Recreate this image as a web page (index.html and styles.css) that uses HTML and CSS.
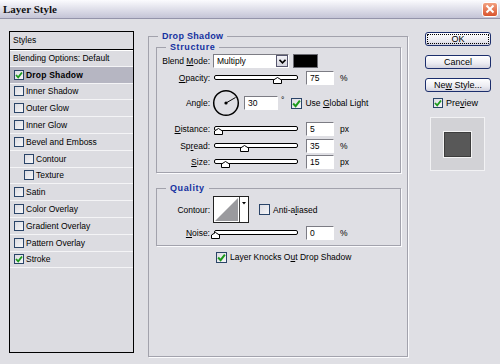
FILE: index.html
```html
<!DOCTYPE html>
<html lang="en">
<head>
  <meta charset="UTF-8">
  <title>Layer Style</title>
  <link rel="stylesheet" href="styles.css">
</head>
<body>

  <!-- Barra de titulo -->
  <div class="titlebar">
    <span class="title">Layer Style</span>
    <span class="close">
      <svg width="10" height="10" viewBox="0 0 10 10"><path d="M1.5 1.5 L8.5 8.5 M8.5 1.5 L1.5 8.5" stroke="#fff" stroke-width="2"/></svg>
    </span>
  </div>

  <div class="main">

    <!-- Lista de estilos -->
    <div class="styles-panel">
      <div class="styles-head">Styles</div>
      <ul class="style-list">
        <li class="item">Blending Options: Default</li>
        <li class="item selected"><span class="check on"><svg width="8" height="8" viewBox="0 0 8 8"><path d="M1 4 L3.2 6.3 L7 1.5" stroke="#1c9a1c" stroke-width="1.8" fill="none"/></svg></span>Drop Shadow</li>
        <li class="item"><span class="check"></span>Inner Shadow</li>
        <li class="item"><span class="check"></span>Outer Glow</li>
        <li class="item"><span class="check"></span>Inner Glow</li>
        <li class="item"><span class="check"></span>Bevel and Emboss</li>
        <li class="item sub"><span class="check"></span>Contour</li>
        <li class="item sub"><span class="check"></span>Texture</li>
        <li class="item"><span class="check"></span>Satin</li>
        <li class="item"><span class="check"></span>Color Overlay</li>
        <li class="item"><span class="check"></span>Gradient Overlay</li>
        <li class="item"><span class="check"></span>Pattern Overlay</li>
        <li class="item"><span class="check on"><svg width="8" height="8" viewBox="0 0 8 8"><path d="M1 4 L3.2 6.3 L7 1.5" stroke="#1c9a1c" stroke-width="1.8" fill="none"/></svg></span>Stroke</li>
      </ul>
    </div>

    <!-- Painel Drop Shadow -->
    <fieldset class="group outer">
      <legend>Drop Shadow</legend>

      <fieldset class="group inner structure">
        <legend>Structure</legend>

        <div class="row first">
          <span class="label">Blend <u>M</u>ode:</span>
          <span class="select">Multiply<span class="arrow"><svg width="7" height="5" viewBox="0 0 7 5"><path d="M0.5 0.8 L3.5 3.8 L6.5 0.8" stroke="#000" stroke-width="1.6" fill="none"/></svg></span></span>
          <span class="swatch"></span>
        </div>

        <div class="row">
          <span class="label"><u>O</u>pacity:</span>
          <span class="slider"><span class="track"></span><svg class="thumb" style="left:60px" width="9" height="7" viewBox="0 0 9 7"><path d="M0.5 3 L4.5 0.5 L8.5 3 L8.5 6.5 L0.5 6.5 Z" fill="#fff" stroke="#000"/></svg></span>
          <span class="num">75</span>
          <span class="unit">%</span>
        </div>

        <div class="row angle-row">
          <span class="label">Angle:</span>
          <svg class="dial" width="28" height="28" viewBox="0 0 28 28">
            <circle cx="14" cy="14" r="12.3" fill="none" stroke="#000" stroke-width="1.5"/>
            <path d="M14 14 L23.5 8.5" stroke="#000" stroke-width="1"/>
            <circle cx="14" cy="14" r="1.6" fill="#000"/>
          </svg>
          <span class="num wide">30</span>
          <span class="deg">&deg;</span>
          <span class="check on big"><svg width="9" height="9" viewBox="0 0 8 8"><path d="M1 4 L3.2 6.3 L7 1.5" stroke="#1c9a1c" stroke-width="1.8" fill="none"/></svg></span>
          <span class="check-label">Use <u>G</u>lobal Light</span>
        </div>

        <div class="row distance-row">
          <span class="label"><u>D</u>istance:</span>
          <span class="slider"><span class="track"></span><svg class="thumb" style="left:1px" width="9" height="7" viewBox="0 0 9 7"><path d="M0.5 3 L4.5 0.5 L8.5 3 L8.5 6.5 L0.5 6.5 Z" fill="#fff" stroke="#000"/></svg></span>
          <span class="num">5</span>
          <span class="unit">px</span>
        </div>

        <div class="row">
          <span class="label">Sp<u>r</u>ead:</span>
          <span class="slider"><span class="track"></span><svg class="thumb" style="left:27px" width="9" height="7" viewBox="0 0 9 7"><path d="M0.5 3 L4.5 0.5 L8.5 3 L8.5 6.5 L0.5 6.5 Z" fill="#fff" stroke="#000"/></svg></span>
          <span class="num">35</span>
          <span class="unit">%</span>
        </div>

        <div class="row size-row">
          <span class="label"><u>S</u>ize:</span>
          <span class="slider"><span class="track"></span><svg class="thumb" style="left:8px" width="9" height="7" viewBox="0 0 9 7"><path d="M0.5 3 L4.5 0.5 L8.5 3 L8.5 6.5 L0.5 6.5 Z" fill="#fff" stroke="#000"/></svg></span>
          <span class="num">15</span>
          <span class="unit">px</span>
        </div>
      </fieldset>

      <fieldset class="group inner quality">
        <legend>Quality</legend>

        <div class="row contour-row">
          <span class="label">Contour:</span>
          <svg class="contour" width="36" height="27" viewBox="0 0 36 27">
            <rect x="0.5" y="0.5" width="35" height="26" fill="#fff" stroke="#222"/>
            <path d="M2 25 L25 2 L25 25 Z" fill="#9a9a9e"/>
            <path d="M26.5 1 L26.5 26" stroke="#444"/>
            <path d="M29 6 L33 6 L31 8.5 Z" fill="#000"/>
          </svg>
          <span class="check big anti"></span>
          <span class="check-label">Anti-a<u>l</u>iased</span>
        </div>

        <div class="row noise-row">
          <span class="label"><u>N</u>oise:</span>
          <span class="slider"><span class="track"></span><svg class="thumb" style="left:-2px" width="9" height="7" viewBox="0 0 9 7"><path d="M0.5 3 L4.5 0.5 L8.5 3 L8.5 6.5 L0.5 6.5 Z" fill="#fff" stroke="#000"/></svg></span>
          <span class="num">0</span>
          <span class="unit">%</span>
        </div>
      </fieldset>

      <div class="knockout">
        <span class="check on big"><svg width="9" height="9" viewBox="0 0 8 8"><path d="M1 4 L3.2 6.3 L7 1.5" stroke="#1c9a1c" stroke-width="1.8" fill="none"/></svg></span>
        <span class="check-label">Layer Knocks O<u>u</u>t Drop Shadow</span>
      </div>
    </fieldset>

    <!-- Botoes -->
    <div class="buttons">
      <button class="btn default">OK</button>
      <button class="btn">Cancel</button>
      <button class="btn">Ne<u>w</u> Style...</button>
      <div class="preview-row">
        <span class="check on"><svg width="8" height="8" viewBox="0 0 8 8"><path d="M1 4 L3.2 6.3 L7 1.5" stroke="#1c9a1c" stroke-width="1.8" fill="none"/></svg></span>
        <span class="check-label">Pre<u>v</u>iew</span>
      </div>
      <div class="preview-box">
        <div class="preview-square"></div>
      </div>
    </div>

  </div>
</body>
</html>
```

FILE: styles.css
```css
* {
  box-sizing: border-box;
}

body {
  margin: 0;
  width: 500px;
  height: 364px;
  overflow: hidden;
  background: #dfdfe4;
  font-family: 'Liberation Sans', Arial, sans-serif;
  font-size: 8.5px;
  color: #000;
}

u {
  text-decoration: underline;
}

/* barra de titulo */
.titlebar {
  height: 19px;
  display: flex;
  align-items: center;
  justify-content: space-between;
  padding: 0 2px 0 3px;
  background: linear-gradient(#fbfbfe, #dadae6 60%, #c4c4d6);
  border-bottom: 1px solid #9494aa;
}

.title {
  font-family: 'Liberation Serif', serif;
  font-weight: bold;
  font-size: 11px;
  color: #111;
}

.close {
  width: 16px;
  height: 15px;
  display: flex;
  align-items: center;
  justify-content: center;
  border: 1px solid #fff;
  border-radius: 3px;
  background: linear-gradient(#f2a080, #d9542e);
}

.main {
  display: flex;
  align-items: flex-start;
  padding: 12px 0 0 9px;
}

/* lista de estilos */
.styles-panel {
  width: 125px;
  height: 322px;
  border: 1px solid #000;
  background: #dcdce1;
}

.styles-head {
  height: 18px;
  line-height: 16px;
  padding-left: 3px;
  border-bottom: 1px solid #000;
  box-shadow: 0 1px 0 #fff;
}

.style-list {
  list-style: none;
  margin: 0;
  padding: 0;
}

.item {
  height: 16.8px;
  display: flex;
  align-items: center;
  padding-left: 4px;
  border-bottom: 1px solid #f4f4f6;
  white-space: nowrap;
}

.item:first-child {
  padding-left: 3px;
}

.item.sub {
  padding-left: 14px;
}

.item.selected {
  background: #b6b6c2;
  font-weight: bold;
  letter-spacing: 0.2px;
}

.check {
  width: 10px;
  height: 10px;
  margin-right: 2px;
  flex: none;
  display: inline-flex;
  align-items: center;
  justify-content: center;
  border: 1px solid #2a4468;
  background: linear-gradient(135deg, #dcdce2, #f6f6f8);
}

.check.big {
  width: 11px;
  height: 11px;
}

/* paineis agrupados */
.group {
  margin: 0;
  min-width: 0;
  border: 1px solid #a2a2ac;
  box-shadow: 1px 1px 0 #fbfbfd;
}

.group legend {
  padding: 0 4px;
  line-height: 11px;
  font-size: 9px;
  font-weight: bold;
  letter-spacing: 0.3px;
  color: #1431a0;
}

.outer {
  width: 260px;
  height: 326px;
  margin-left: 14px;
  padding: 0 6px 0 7px;
}

.outer > legend {
  margin-left: 2px;
}

.inner {
  padding: 0 4px;
}

.inner > legend {
  margin-left: 5px;
  letter-spacing: 0.6px;
}

.structure {
  padding-bottom: 3px;
}

.quality {
  margin-top: 10px;
  padding-bottom: 5px;
}

.row {
  height: 14px;
  display: flex;
  align-items: center;
  margin-top: 3px;
  white-space: nowrap;
}

.row.first {
  margin-top: 1px;
}

.angle-row {
  height: 28px;
  margin-top: 4px;
}

.distance-row {
  margin-top: 5px;
}

.size-row {
  margin-top: 2px;
}

.contour-row {
  height: 27px;
  margin-top: 2px;
}

.noise-row {
  margin-top: 3px;
}

.label {
  width: 49px;
  margin-right: 3px;
  text-align: right;
}

.select {
  width: 76px;
  height: 14px;
  display: flex;
  align-items: center;
  justify-content: space-between;
  padding-left: 3px;
  background: #fff;
  border: 1px solid;
  border-color: #7c7c84 #fff #fff #7c7c84;
}

.select .arrow {
  width: 12px;
  height: 12px;
  display: flex;
  align-items: center;
  justify-content: center;
  border: 1px solid #56566e;
  background: linear-gradient(#f4f4f8, #d4d4de);
}

.swatch {
  width: 25px;
  height: 14px;
  margin-left: 4px;
  background: #000;
  border: 1px solid #6c6c74;
}

.slider {
  position: relative;
  width: 85px;
  height: 14px;
  margin-right: 8px;
}

.track {
  position: absolute;
  left: 1px;
  right: 0;
  top: 4px;
  height: 5px;
  border: 1px solid #000;
  border-radius: 2px;
  background: #fff;
}

.thumb {
  position: absolute;
  top: 6px;
}

.num {
  width: 28px;
  height: 14px;
  line-height: 12px;
  padding-left: 3px;
  background: #fff;
  border: 1px solid;
  border-color: #7c7c84 #fff #fff #7c7c84;
}

.num.wide {
  width: 34px;
  margin-left: 4px;
}

.unit {
  margin-left: 6px;
}

.deg {
  margin: 0 7px 0 3px;
  align-self: flex-start;
  margin-top: 6px;
}

.check-label {
  margin-left: 1px;
}

.dial {
  margin-left: -1px;
}

.anti {
  margin-left: 10px;
}

.knockout {
  display: flex;
  align-items: center;
  height: 12px;
  margin-top: 5px;
  padding-left: 60px;
}

/* botoes */
.buttons {
  width: 66px;
  margin-left: 17px;
  padding-top: 1px;
}

.btn {
  display: block;
  width: 66px;
  height: 14px;
  margin: 0 0 9px;
  padding: 0;
  border: 1px solid #1c2e6c;
  border-radius: 3px;
  background: linear-gradient(#ffffff, #ececf2 60%, #d2d2de);
  font-family: inherit;
  font-size: 9px;
  line-height: 12px;
  color: #000;
}

.btn.default {
  outline: 1px dotted #000;
  outline-offset: -3px;
}

.preview-row {
  display: flex;
  align-items: center;
  height: 10px;
  margin-top: -3px;
  padding-left: 8px;
  font-size: 9px;
}

.preview-box {
  width: 55px;
  height: 54px;
  margin: 9px 0 0 5px;
  display: flex;
  align-items: center;
  justify-content: center;
  background: #d2d2d6;
  border: 1px solid #f2f2f4;
}

.preview-square {
  width: 27px;
  height: 25px;
  background: #585858;
  border: 1px solid #3c3c3c;
  box-shadow: 0 0 0 1px #f4f4f4;
}
```
